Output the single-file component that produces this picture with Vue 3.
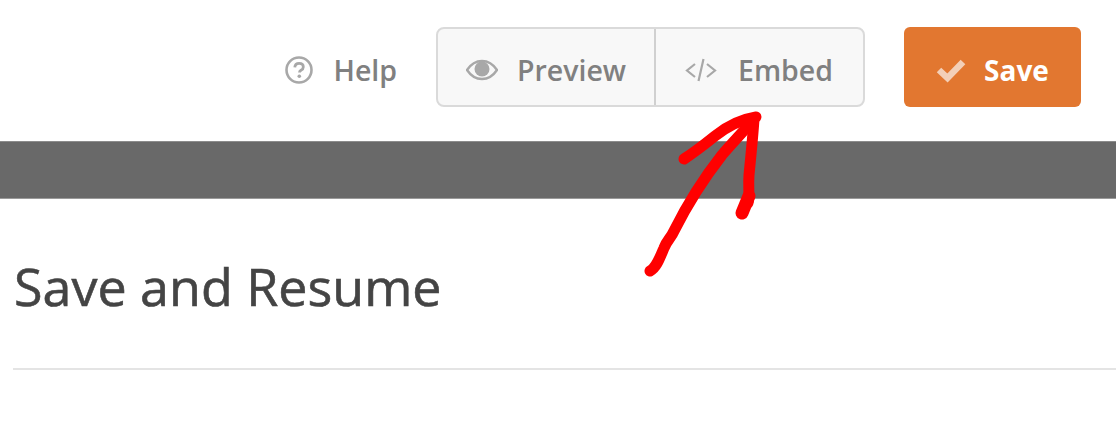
<script setup>
const title = 'Save and Resume'
</script>

<template>
  <div class="page">
    <header class="toolbar">
      <a class="help">
        <svg class="help-icon" width="28" height="28" viewBox="0 0 28 28" fill="none">
          <circle cx="14" cy="14" r="12.500" stroke="#a8a8a8" stroke-width="2.600" />
          <path d="M9.800 11.400c.2-2.800 2-4 4.300-4 2.500 0 4.200 1.400 4.200 3.500 0 1.800-1 2.600-2.300 3.300-1 .6-1.500 1.100-1.500 2.400" stroke="#a8a8a8" stroke-width="2.800" />
          <circle cx="14.300" cy="20.300" r="1.800" fill="#a8a8a8" />
        </svg>
        <span>Help</span>
      </a>
      <div class="group">
        <a class="group-btn preview">
          <svg width="32" height="22" viewBox="0 0 32 22">
            <path d="M1 11C5 5 10 2 16 2s11 3 15 9c-4 6-9 9-15 9S5 17 1 11z" fill="none" stroke="#a8a8a8" stroke-width="2.400" />
            <circle cx="16" cy="10" r="7.500" fill="#a8a8a8" />
          </svg>
          <span>Preview</span>
        </a>
        <a class="group-btn embed">
          <svg width="32" height="26" viewBox="0 0 32 26" fill="none" stroke="#a8a8a8" stroke-width="2.200">
            <path d="M10 7l-8 6.500 8 6.500M22 7l8 6.500-8 6.500M18.500 2l-5 22" />
          </svg>
          <span>Embed</span>
        </a>
      </div>
      <a class="save">
        <svg width="30" height="26" viewBox="0 0 30 26">
          <path d="M3 13l8.500 8L27 5" fill="none" stroke="#f3cfb7" stroke-width="6.500" />
        </svg>
        <span>Save</span>
      </a>
    </header>
    <div class="band"></div>
    <main class="content">
      <h1>{{ title }}</h1>
      <hr />
    </main>
    <svg class="arrow" width="1116" height="426" viewBox="0 0 1116 426" fill="none" stroke="#ff0000" stroke-linecap="round" stroke-linejoin="round">
      <path d="M650 271C656 268 659 260 664 248C667 240 671 238 674 231C686 207 704 178 722 155C733 142 744 131 754 119" stroke-width="11" />
      <path d="M684 159C695 152 705 144 715 136C725 128 737 120 756 117" stroke-width="11" />
      <path d="M754 119C753 135 751 155 749 175C748 188 750 195 748 203" stroke-width="11" />
      <path d="M749 196L742 213" stroke-width="13" />
    </svg>
  </div>
</template>

<style>
html, body { margin: 0; background: #fff; }
</style>

<style scoped>
.page {
  position: relative;
  width: 1116px;
  height: 426px;
  overflow: hidden;
  background: #fff;
  font-family: "Open Sans", "Noto Sans", sans-serif;
}
.toolbar {
  height: 141px;
  box-sizing: border-box;
  padding: 27px 35px 0 0;
  display: flex;
  justify-content: flex-end;
  align-items: flex-start;
}
.help {
  display: flex;
  align-items: center;
  height: 80px;
  box-sizing: border-box;
  padding-top: 5px;
  gap: 20px;
  margin-right: 39px;
  color: #808080;
  font-size: 28.500px;
  font-weight: 600;
}
.help-icon { width: 28px; height: 28px; }
.group {
  display: flex;
  width: 429px;
  height: 80px;
  box-sizing: border-box;
  background: #f8f8f8;
  border: 2px solid #dadada;
  border-radius: 8px;
  margin-right: 39px;
}
.group-btn {
  display: flex;
  align-items: center;
  box-sizing: border-box;
  padding-top: 5px;
  color: #808080;
  font-size: 28.500px;
  font-weight: 600;
}
.preview {
  width: 218px;
  padding-left: 28px;
  gap: 19px;
  border-right: 2px solid #d0d0d0;
}
.embed {
  flex: 1;
  padding-left: 29px;
  gap: 21px;
}
.save {
  display: flex;
  align-items: center;
  justify-content: center;
  box-sizing: border-box;
  padding-top: 6px;
  gap: 18px;
  width: 177px;
  height: 80px;
  border-radius: 6px;
  background: #e27730;
  color: #fff;
  font-size: 28px;
  font-weight: 700;
}
.band {
  height: 58px;
  box-sizing: border-box;
  background: #696969;
  border-top: 1px solid #8c8c8c;
  border-bottom: 1px solid #9a9a9a;
}
.content {
  padding: 49px 0 0 14px;
}
h1 {
  margin: 0;
  height: 66px;
  line-height: 76px;
  font-size: 52px;
  font-weight: 400;
  -webkit-text-stroke: 0.6px #444;
  color: #444;
}
hr {
  margin: 54px 0 0 -1px;
  border: 0;
  height: 2px;
  background: #e4e4e4;
}
.arrow {
  position: absolute;
  left: 0;
  top: 0;
  pointer-events: none;
}
</style>
